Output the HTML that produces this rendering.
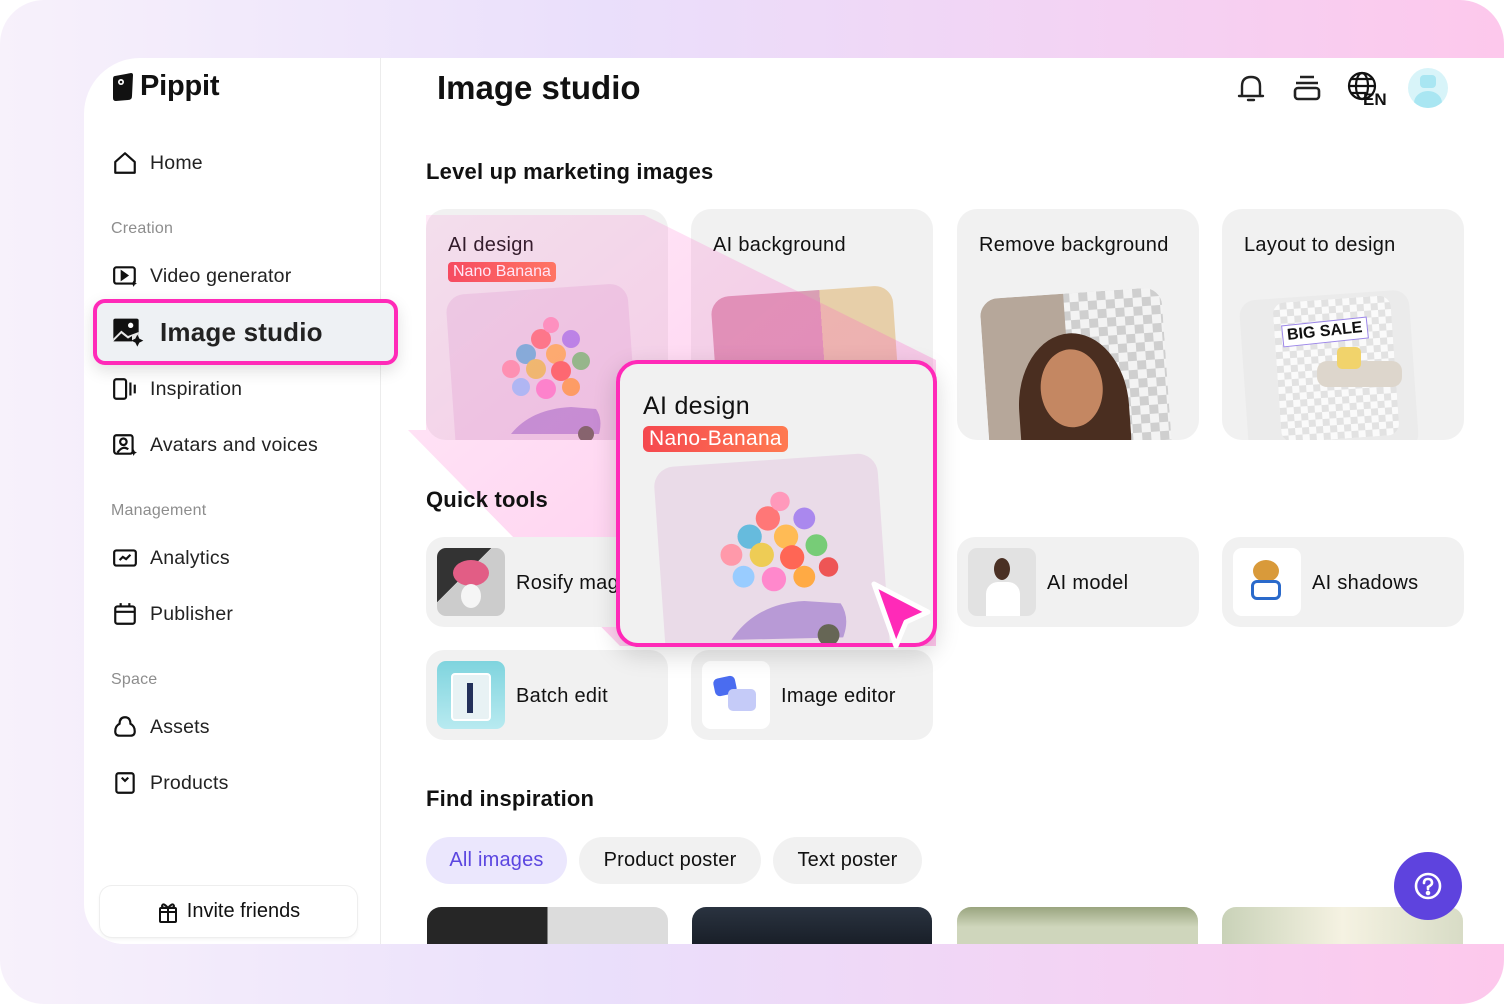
<!DOCTYPE html>
<html><head><meta charset="utf-8"><style>
*{box-sizing:border-box;margin:0;padding:0}
body{width:1504px;height:1004px;background:#fff;font-family:"Liberation Sans",sans-serif;color:#111;position:relative;overflow:hidden}
.frame{position:absolute;left:0;top:0;width:1504px;height:1004px;border-radius:44px;background:linear-gradient(90deg,#f7f1fb 0%,#eadffb 40%,#f4d2f3 75%,#fdc8ec 100%)}
.app{position:absolute;left:84px;top:58px;width:1420px;height:886px;background:#fff;border-radius:56px 0 0 40px;overflow:hidden}
.abs{position:absolute}
.side-div{position:absolute;left:296px;top:0;width:1px;height:886px;background:#ececec}
.nav{position:absolute;left:28px;display:flex;align-items:center;font-size:19.5px;color:#222;letter-spacing:.2px}
.nav svg{width:26px;height:26px;margin-right:12px}
.grp{position:absolute;left:27px;font-size:16px;color:#8d8d8d;letter-spacing:.2px}
.card{position:absolute;background:#f1f1f1;border-radius:20px;overflow:hidden}
.card .t{position:absolute;left:22px;top:25px;font-size:20px;color:#111;letter-spacing:.3px}
.h2{position:absolute;font-size:22px;font-weight:bold;color:#111;letter-spacing:.2px}
.qt{position:absolute;background:#f1f1f1;border-radius:18px;width:242px;height:90px}
.qt .th{position:absolute;left:11px;top:11px;width:68px;height:68px;border-radius:9px;overflow:hidden}
.qt .l{position:absolute;left:90px;top:35px;font-size:20px;letter-spacing:.3px}
.pill{position:absolute;top:779px;height:47px;border-radius:24px;background:#f1f1f1;font-size:20px;line-height:47px;text-align:center;letter-spacing:.2px}
</style></head><body>
<div class="frame"></div>
<div class="app">
  <div class="side-div"></div>
  <div class="abs" style="left:28px;top:12px;display:flex;align-items:center">
    <svg width="22" height="30" viewBox="0 0 22 30"><path d="M3 4 L19 1 Q21 1 21 3 L20 24 Q20 28 16 28 L4 29 Q1 29 1 26 L1 7 Q1 4 3 4Z" fill="#111"/><circle cx="9" cy="10" r="3" fill="#fff"/><circle cx="9" cy="10" r="1.3" fill="#111"/></svg>
    <span style="font-size:29px;font-weight:bold;margin-left:6px;letter-spacing:-0.2px">Pippit</span>
  </div>
  <div class="nav" style="top:92px"><svg viewBox="0 0 24 24" fill="none" stroke="#111" stroke-width="2"><path d="M3 11 L12 3 L21 11 V21 H3 Z" stroke-linejoin="round"/></svg>Home</div>
  <div class="grp" style="top:162px">Creation</div>
  <div class="nav" style="top:205px"><svg viewBox="0 0 24 24" fill="none" stroke="#111" stroke-width="2"><rect x="2" y="4" width="19" height="15" rx="2"/><path d="M9 8 L14 11.5 L9 15Z" fill="#111"/><path d="M20 16 l1 2 2 1 -2 1 -1 2 -1-2 -2-1 2-1z" fill="#111" stroke="none"/></svg>Video generator</div>
  <div class="abs" style="left:9px;top:241px;width:305px;height:66px;border:4px solid #ff2ab8;border-radius:12px;background:#eef1f4;box-shadow:0 6px 16px rgba(0,0,0,.12)"></div>
  <div class="nav" style="top:258px;font-size:26px;font-weight:bold;color:#222"><svg viewBox="0 0 24 24" style="width:32px;height:32px;margin-right:16px"><rect x="1" y="2" width="19" height="17" rx="1.5" fill="#111"/><path d="M1 17 L7 11 L12 15 L20 12 V19 H1Z" fill="#fff" opacity=".9"/><path d="M1 19 L7 13 L12 17 L15 15 V19Z" fill="#111"/><circle cx="14" cy="7" r="2" fill="#fff"/><path d="M19 14 l1.5 3 3 1.5 -3 1.5 -1.5 3 -1.5-3 -3-1.5 3-1.5z" fill="#111"/></svg>Image studio</div>
  <div class="nav" style="top:318px"><svg viewBox="0 0 24 24" fill="none" stroke="#111" stroke-width="2"><rect x="2" y="3" width="11" height="18" rx="2"/><path d="M17 6V18M21 8V16"/></svg>Inspiration</div>
  <div class="nav" style="top:374px"><svg viewBox="0 0 24 24" fill="none" stroke="#111" stroke-width="2"><rect x="2" y="3" width="17" height="17" rx="2"/><circle cx="10.5" cy="9" r="3"/><path d="M5 19 Q10 12 15 16"/><path d="M20 16 l1 2 2 1 -2 1 -1 2 -1-2 -2-1 2-1z" fill="#111" stroke="none"/></svg>Avatars and voices</div>
  <div class="grp" style="top:444px">Management</div>
  <div class="nav" style="top:487px"><svg viewBox="0 0 24 24" fill="none" stroke="#111" stroke-width="2"><rect x="2" y="5" width="20" height="14" rx="2"/><path d="M7 14 L10 11 L13 13 L17 9"/></svg>Analytics</div>
  <div class="nav" style="top:543px"><svg viewBox="0 0 24 24" fill="none" stroke="#111" stroke-width="2"><rect x="3" y="5" width="18" height="16" rx="2"/><path d="M3 10H21M8 2V6M16 2V6"/></svg>Publisher</div>
  <div class="grp" style="top:613px">Space</div>
  <div class="nav" style="top:656px"><svg viewBox="0 0 24 24" fill="none" stroke="#111" stroke-width="2"><path d="M12 3 Q17 3 17 9 Q21 11 21 16 Q21 20 17 20 H7 Q3 20 3 16 Q3 11 7 9 Q7 3 12 3Z"/></svg>Assets</div>
  <div class="nav" style="top:712px"><svg viewBox="0 0 24 24" fill="none" stroke="#111" stroke-width="2"><rect x="4" y="3" width="16" height="18" rx="2"/><path d="M9 7 L12 10 L15 7"/></svg>Products</div>
  <div class="abs" style="left:16px;top:828px;width:257px;height:51px;border-radius:12px;background:#fff;box-shadow:0 0 0 1px #eee,0 2px 4px rgba(0,0,0,.06);display:flex;align-items:center;justify-content:center;font-size:20px">
    <svg width="22" height="24" viewBox="0 0 22 24" fill="none" stroke="#111" stroke-width="2" style="margin-right:8px"><rect x="3" y="8" width="16" height="14" rx="1"/><path d="M2 12H20M11 8V22M11 8 Q6 2 5 6 Q5 8 11 8 Q16 2 17 6 Q17 8 11 8"/></svg>Invite friends</div>

  <div class="abs" style="left:353px;top:11px;font-size:33px;font-weight:bold">Image studio</div>
  <svg class="abs" style="left:1152px;top:14px" width="30" height="32" viewBox="0 0 30 32" fill="none" stroke="#222" stroke-width="2.4"><path d="M6 24 V14 Q6 5 15 5 Q24 5 24 14 V24 M3 24 H27 M12 28 H18" stroke-linecap="round"/></svg>
  <svg class="abs" style="left:1208px;top:16px" width="30" height="28" viewBox="0 0 30 28" fill="none" stroke="#222" stroke-width="2.6"><path d="M8 3H22M4 9H26"/><rect x="3" y="14" width="24" height="11" rx="3"/></svg>
  <svg class="abs" style="left:1262px;top:12px" width="44" height="36" viewBox="0 0 44 36"><g fill="none" stroke="#111" stroke-width="2.2"><circle cx="16" cy="16" r="13"/><ellipse cx="16" cy="16" rx="6" ry="13"/><path d="M3 16H29M5 9H27M5 23H20"/></g><text x="17" y="35" font-family="Liberation Sans" font-weight="bold" font-size="17" fill="#111">EN</text></svg>
  <div class="abs" style="left:1324px;top:10px;width:40px;height:40px;border-radius:50%;background:#d8f4f9;overflow:hidden"><div style="position:absolute;left:12px;top:7px;width:16px;height:13px;border-radius:4px;background:#a9e6f2"></div><div style="position:absolute;left:6px;top:23px;width:28px;height:24px;border-radius:50%;background:#a9e6f2"></div></div>

  <div class="h2" style="left:342px;top:101px">Level up marketing images</div>
  <div class="card" style="left:342px;top:151px;width:242px;height:231px">
    <div class="t">AI design</div>
    <div class="abs" style="left:22px;top:53px;background:linear-gradient(90deg,#f5484f,#ff7a50);color:#fff;font-size:16px;padding:1px 5px;border-radius:4px">Nano Banana</div>
    <div class="abs" style="left:25px;top:80px;width:182px;height:170px;border-radius:18px;background:#eadbe8;transform:rotate(-4deg)"></div>
    <svg class="abs" style="left:55px;top:100px" width="140" height="140" viewBox="0 0 140 140"><g opacity=".95"><circle cx="60" cy="30" r="10" fill="#f77"/><circle cx="45" cy="45" r="10" fill="#6bd"/><circle cx="75" cy="45" r="10" fill="#fb5"/><circle cx="90" cy="30" r="9" fill="#a8e"/><circle cx="30" cy="60" r="9" fill="#f9a"/><circle cx="55" cy="60" r="10" fill="#ec5"/><circle cx="80" cy="62" r="10" fill="#f65"/><circle cx="100" cy="52" r="9" fill="#7c7"/><circle cx="40" cy="78" r="9" fill="#9cf"/><circle cx="65" cy="80" r="10" fill="#f8c"/><circle cx="90" cy="78" r="9" fill="#fa4"/><circle cx="70" cy="16" r="8" fill="#f9b"/></g><path d="M30 125 Q50 100 90 98 L115 100 Q122 110 118 125Z" fill="#b89ad6"/><circle cx="105" cy="125" r="8" fill="#665"/></svg>
  </div>
  <div class="card" style="left:607px;top:151px;width:242px;height:231px">
    <div class="t">AI background</div>
    <div class="abs" style="left:25px;top:82px;width:182px;height:170px;border-radius:18px;background:linear-gradient(90deg,#d99fb4 60%,#e7cfa9 60%);transform:rotate(-4deg)"></div>
  </div>
  <div class="card" style="left:873px;top:151px;width:242px;height:231px">
    <div class="t">Remove background</div>
    <div class="abs" style="left:28px;top:84px;width:182px;height:170px;border-radius:18px;transform:rotate(-4deg);overflow:hidden;background:repeating-conic-gradient(#cfcfcf 0 25%,#f3f3f3 0 50%) 0 0/18px 18px"><div style="position:absolute;left:0;top:0;width:84px;height:180px;background:#b6a79a"></div><div style="position:absolute;left:32px;top:40px;width:110px;height:150px;border-radius:50% 50% 30% 30%;background:#4a2e20"></div><div style="position:absolute;left:55px;top:56px;width:62px;height:78px;border-radius:50%;background:#c48762"></div></div>
  </div>
  <div class="card" style="left:1138px;top:151px;width:242px;height:231px">
    <div class="t">Layout to design</div>
    <div class="abs" style="left:22px;top:86px;width:170px;height:160px;border-radius:16px;background:#ebebeb;transform:rotate(-4deg)"></div>
    <div class="abs" style="left:55px;top:90px;width:118px;height:140px;border-radius:12px;transform:rotate(-4deg);background:repeating-conic-gradient(#e2e2e2 0 25%,#fafafa 0 50%) 0 0/14px 14px"></div>
    <div class="abs" style="left:60px;top:112px;font-size:16px;font-weight:bold;border:1px solid #9b86e8;background:#fff;padding:1px 4px;transform:rotate(-6deg)">BIG SALE</div>
    <div class="abs" style="left:95px;top:152px;width:85px;height:26px;border-radius:10px;background:#ddd6cc"></div>
    <div class="abs" style="left:115px;top:138px;width:24px;height:22px;border-radius:5px;background:#f1d36b"></div>
  </div>

  <svg class="abs" style="left:0;top:0" width="1420" height="886"><defs><linearGradient id="pg" x1="0" y1="0" x2="1" y2="1"><stop offset="0" stop-color="#ff5ac8" stop-opacity=".12"/><stop offset="1" stop-color="#ff5ac8" stop-opacity=".35"/></linearGradient></defs><polygon points="342,157 560,157 852,302 852,588 536,588 324,372 342,372" fill="url(#pg)"/></svg>

  <div class="h2" style="left:342px;top:429px">Quick tools</div>
  <div class="qt" style="left:342px;top:479px"><div class="th" style="background:linear-gradient(135deg,#333 40%,#ccc 40%)"><div style="position:absolute;left:16px;top:12px;width:36px;height:26px;border-radius:50%;background:#e25d85"></div><div style="position:absolute;left:24px;top:36px;width:20px;height:24px;border-radius:50%;background:#f5f5f5"></div></div><div class="l">Rosify mag</div></div>
  <div class="qt" style="left:873px;top:479px"><div class="th" style="background:#e2e2e2"><div style="position:absolute;left:18px;top:34px;width:34px;height:40px;border-radius:12px 12px 0 0;background:#fff"></div><div style="position:absolute;left:26px;top:10px;width:16px;height:22px;border-radius:50%;background:#4a3024"></div></div><div class="l">AI model</div></div>
  <div class="qt" style="left:1138px;top:479px"><div class="th" style="background:#fff"><div style="position:absolute;left:20px;top:12px;width:26px;height:22px;border-radius:50%;background:#d99a3a"></div><div style="position:absolute;left:18px;top:32px;width:30px;height:20px;border-radius:6px;background:#fff;border:3px solid #2a6acb"></div></div><div class="l">AI shadows</div></div>
  <div class="qt" style="left:342px;top:592px"><div class="th" style="background:linear-gradient(180deg,#7fd4de,#b8eaf0)"><div style="position:absolute;left:14px;top:12px;width:40px;height:48px;border-radius:4px;background:#e8f2f4;border:2px solid #fff"></div><div style="position:absolute;left:30px;top:22px;width:6px;height:30px;background:#23315a"></div></div><div class="l">Batch edit</div></div>
  <div class="qt" style="left:607px;top:592px"><div class="th" style="background:#fff"><div style="position:absolute;left:12px;top:16px;width:22px;height:18px;border-radius:5px;background:#4a6cf0;transform:rotate(-12deg)"></div><div style="position:absolute;left:26px;top:28px;width:28px;height:22px;border-radius:5px;background:#c5cbf8"></div></div><div class="l">Image editor</div></div>

  <div class="abs" style="left:532px;top:302px;width:321px;height:287px;border:4px solid #ff2ab8;border-radius:22px;background:#f1f1f1;box-shadow:0 8px 24px rgba(0,0,0,.15);overflow:hidden">
    <div class="abs" style="left:23px;top:28px;font-size:25px;letter-spacing:.3px">AI design</div>
    <div class="abs" style="left:23px;top:62px;background:linear-gradient(90deg,#f5484f,#ff7a50);color:#fff;font-size:21px;padding:1px 6px;border-radius:6px;letter-spacing:.3px">Nano-Banana</div>
    <div class="abs" style="left:40px;top:96px;width:224px;height:210px;border-radius:20px;background:#eadbe8;transform:rotate(-4deg)"></div>
    <svg class="abs" style="left:70px;top:118px" width="180" height="170" viewBox="0 0 140 140"><g><circle cx="60" cy="30" r="10" fill="#f77"/><circle cx="45" cy="45" r="10" fill="#6bd"/><circle cx="75" cy="45" r="10" fill="#fb5"/><circle cx="90" cy="30" r="9" fill="#a8e"/><circle cx="30" cy="60" r="9" fill="#f9a"/><circle cx="55" cy="60" r="10" fill="#ec5"/><circle cx="80" cy="62" r="10" fill="#f65"/><circle cx="100" cy="52" r="9" fill="#7c7"/><circle cx="40" cy="78" r="9" fill="#9cf"/><circle cx="65" cy="80" r="10" fill="#f8c"/><circle cx="90" cy="78" r="9" fill="#fa4"/><circle cx="70" cy="16" r="8" fill="#f9b"/><circle cx="110" cy="70" r="8" fill="#e55"/></g><path d="M30 130 Q50 100 90 98 L120 100 Q128 112 122 128Z" fill="#b89ad6"/><circle cx="110" cy="126" r="9" fill="#665"/></svg>
  </div>
  <svg class="abs" style="left:782px;top:520px" width="70" height="76" viewBox="0 0 70 76"><path d="M8 6 L62 34 L40 44 L30 68 Z" fill="#ff2ab8" stroke="#fff" stroke-width="5" stroke-linejoin="round"/></svg>

  <div class="h2" style="left:342px;top:728px">Find inspiration</div>
  <div class="pill" style="left:342px;width:141px;background:#ebe7fd;color:#5b46e0">All images</div>
  <div class="pill" style="left:495px;width:182px">Product poster</div>
  <div class="pill" style="left:689px;width:149px">Text poster</div>
  <div class="abs" style="left:343px;top:849px;width:241px;height:50px;border-radius:14px 14px 0 0;background:linear-gradient(90deg,#262626 50%,#dcdcdc 50%)"></div>
  <div class="abs" style="left:608px;top:849px;width:240px;height:50px;border-radius:14px 14px 0 0;background:linear-gradient(180deg,#2a3340,#131820)"></div>
  <div class="abs" style="left:873px;top:849px;width:241px;height:50px;border-radius:14px 14px 0 0;background:linear-gradient(180deg,#9aa57f,#cfd6bc 40%)"></div>
  <div class="abs" style="left:1138px;top:849px;width:241px;height:50px;border-radius:14px 14px 0 0;background:linear-gradient(90deg,#c9d2b8,#f5f2e2 50%,#d8dcc6)"></div>
  <div class="abs" style="left:1310px;top:794px;width:68px;height:68px;border-radius:50%;background:#5e43de;display:flex;align-items:center;justify-content:center"><svg width="30" height="30" viewBox="0 0 30 30" fill="none" stroke="#fff" stroke-width="2.6"><circle cx="15" cy="15" r="12"/><path d="M11 12 Q11 8 15 8 Q19 8 19 12 Q19 14 15 16 V18" stroke-linecap="round"/><circle cx="15" cy="22" r="1" fill="#fff"/></svg></div>
</div>
</body></html>
